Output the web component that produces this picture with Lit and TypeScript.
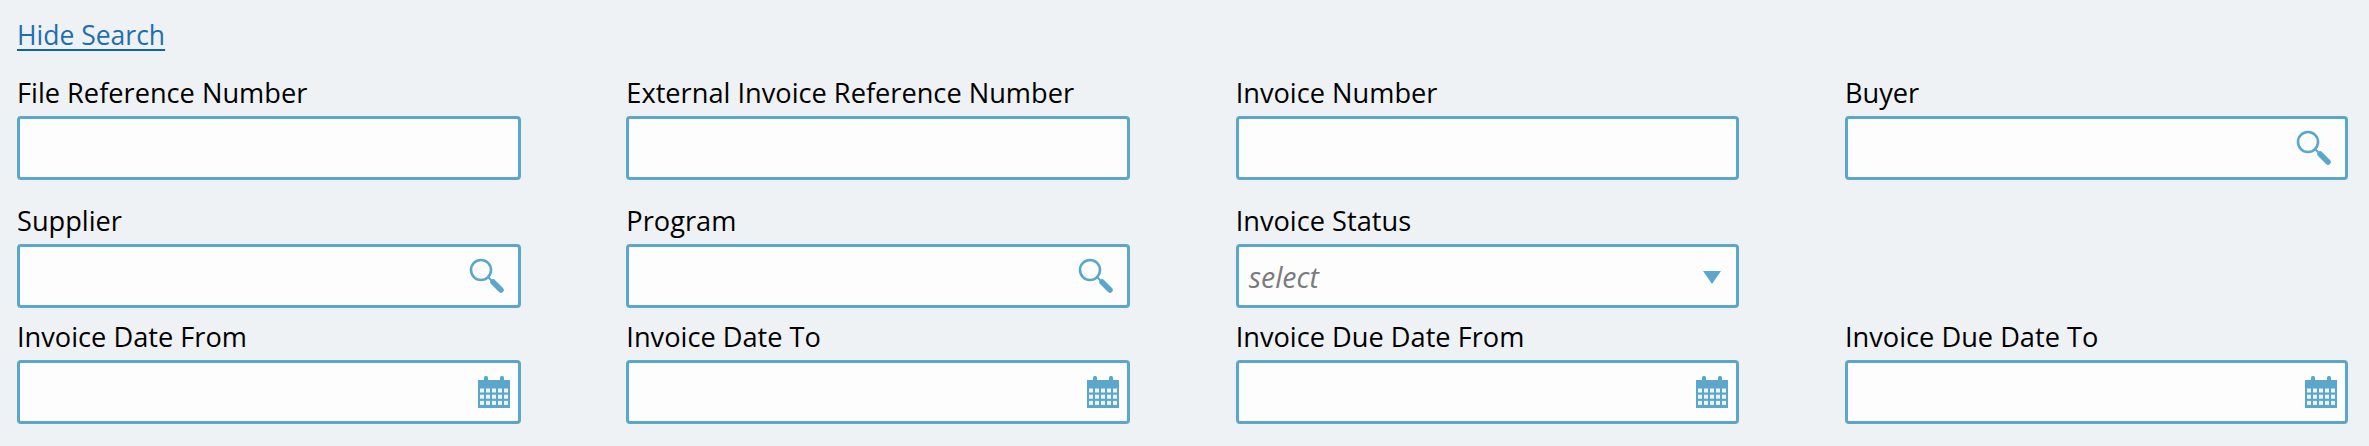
import { LitElement, html, css, svg } from "lit";
import { customElement } from "lit/decorators.js";

type Kind = "text" | "search" | "select" | "date";
interface F { label: string; kind: Kind; }
const rows: (F | null)[][] = [
  [
    { label: "File Reference Number", kind: "text" },
    { label: "External Invoice Reference Number", kind: "text" },
    { label: "Invoice Number", kind: "text" },
    { label: "Buyer", kind: "search" },
  ],
  [
    { label: "Supplier", kind: "search" },
    { label: "Program", kind: "search" },
    { label: "Invoice Status", kind: "select" },
    null,
  ],
  [
    { label: "Invoice Date From", kind: "date" },
    { label: "Invoice Date To", kind: "date" },
    { label: "Invoice Due Date From", kind: "date" },
    { label: "Invoice Due Date To", kind: "date" },
  ],
];

const searchIcon = html`<svg class="icon search" width="36" height="36" viewBox="0 0 36 36">
  <circle cx="12" cy="12" r="10" fill="none" stroke="#5ba7cc" stroke-width="2.6"></circle>
  <path d="M19.5 19.5 L24 24" stroke="#5ba7cc" stroke-width="2" fill="none"></path>
  <path d="M24 24 L32 32" stroke="#5ba7cc" stroke-width="5.5" stroke-linecap="round" fill="none"></path>
</svg>`;

const calCells = [0, 1, 2, 3, 4].flatMap((c) =>
  [0, 1, 2].map((r) => svg`<rect x=${2 + c * 6} y=${12.5 + r * 6.2} width="4" height="4" fill="#eef4f8"></rect>`)
);
const dateIcon = html`<svg class="icon date" width="32" height="32" viewBox="0 0 32 32">
  <rect x="0" y="4" width="32" height="28" fill="#5ba7cc"></rect>
  <rect x="6" y="0" width="4" height="7" rx="1.5" fill="#5ba7cc"></rect>
  <rect x="22" y="0" width="4" height="7" rx="1.5" fill="#5ba7cc"></rect>
  ${calCells}
</svg>`;

const caretIcon = html`<svg class="icon caret" width="18" height="13" viewBox="0 0 18 13">
  <path d="M0 0 H18 L9 13 Z" fill="#5ba7cc"></path>
</svg>`;

@customElement("app-root")
export class AppRoot extends LitElement {
  static styles = css`
    :host {
      display: block;
      height: 446px;
      box-sizing: border-box;
      background: #eef2f5;
      padding: 19px 20px 0 17px;
      font-family: "Open Sans", "Noto Sans", "Liberation Sans", sans-serif;
      color: #000;
      overflow: hidden;
    }
    .toggle {
      display: block;
      width: max-content;
      font-size: 26.5px;
      line-height: 32px;
      color: #1f6fad;
      text-decoration: underline;
      text-decoration-color: #0b64a5;
      text-decoration-thickness: 2px;
      text-underline-offset: 4px;
      margin-bottom: 26px;
    }
    .grid {
      display: grid;
      grid-template-columns: repeat(4, 503.5px);
      column-gap: 105.83px;
    }
    .field {
      display: flex;
      flex-direction: column;
      padding-bottom: 25px;
    }
    .row2 { padding-bottom: 13px; }
    label {
      display: block;
      font-size: 27.2px;
      line-height: 32px;
      height: 32px;
      margin-bottom: 7px;
      white-space: nowrap;
      font-weight: 500;
    }
    .box {
      box-sizing: border-box;
      height: 64px;
      border: 3px solid #5ba7cc;
      border-radius: 4px;
      background: #fdfdfd;
      display: flex;
      align-items: center;
      justify-content: flex-end;
      padding: 0 7px 0 10px;
    }
    .box.select { justify-content: space-between; padding-right: 15px; }
    .placeholder {
      font-size: 28.5px;
      font-style: italic;
      color: #7b7b7b;
      margin-top: 2px;
    }
    .icon { flex: none; display: block; }
    .search { margin-right: 6px; }
    .date { margin-right: 1px; }
    .caret { margin-top: 2px; }
  `;

  private renderBox(kind: Kind) {
    if (kind === "search") return html`<div class="box">${searchIcon}</div>`;
    if (kind === "date") return html`<div class="box">${dateIcon}</div>`;
    if (kind === "select")
      return html`<div class="box select"><span class="placeholder">select</span>${caretIcon}</div>`;
    return html`<div class="box"></div>`;
  }

  render() {
    return html`
      <a class="toggle">Hide Search</a>
      <div class="grid">
        ${rows.map((row, i) =>
          row.map((f) =>
            f
              ? html`<div class="field ${i === 1 ? "row2" : ""}">
                  <label>${f.label}</label>${this.renderBox(f.kind)}
                </div>`
              : html`<div></div>`
          )
        )}
      </div>
    `;
  }
}
